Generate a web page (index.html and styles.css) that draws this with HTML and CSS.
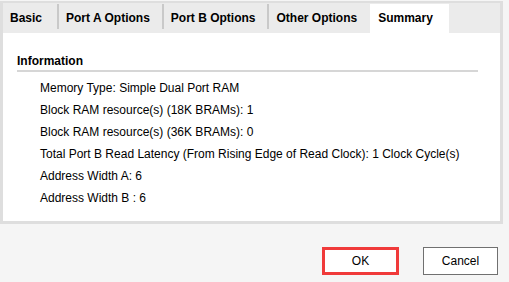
FILE: index.html
```html
<!DOCTYPE html>
<html lang="en">
<head>
  <meta charset="UTF-8">
  <title>Block Memory Generator - Summary</title>
  <link rel="stylesheet" href="styles.css">
</head>
<body>
  <div class="dialog">
    <!-- tabbed panel -->
    <div class="panel">
      <div class="tabs">
        <div class="tab">Basic</div>
        <div class="tab">Port A Options</div>
        <div class="tab">Port B Options</div>
        <div class="tab">Other Options</div>
        <div class="tab active">Summary</div>
      </div>
      <div class="content">
        <div class="section-title">Information</div>
        <ul class="info">
          <li>Memory Type: Simple Dual Port RAM</li>
          <li>Block RAM resource(s) (18K BRAMs): 1</li>
          <li>Block RAM resource(s) (36K BRAMs): 0</li>
          <li>Total Port B Read Latency (From Rising Edge of Read Clock): 1 Clock Cycle(s)</li>
          <li>Address Width A: 6</li>
          <li>Address Width B : 6</li>
        </ul>
      </div>
    </div>

    <div class="buttons">
      <button class="btn ok">OK</button>
      <button class="btn">Cancel</button>
    </div>
  </div>
</body>
</html>
```

FILE: styles.css
```css
body {
  margin: 0;
  background: #f5f5f5;
  font-family: "Liberation Sans", Arial, sans-serif;
  font-size: 12px;
  color: #000;
}
.dialog {
  width: 509px;
  height: 282px;
}
.panel {
  margin-top: 1px;
  width: 497px;
  border: 3px solid #dedede;
  border-top-width: 2px;
  background: #fff;
}
.tabs {
  display: flex;
  height: 30px;
  background: #ebebeb;
  padding-top: 1px;
  box-sizing: border-box;
}
.tab {
  font-weight: bold;
  height: 25px;
  line-height: 28px;
  padding: 0 12px 0 7px;
  border-left: 2px solid #c9c9c9;
}
.tab:first-child {
  border-left: none;
  padding: 0 15px 0 7px;
}
.tab.active {
  background: #fff;
  height: 29px;
  padding: 0 16px 0 8px;
  margin-left: 1px;
  border-left: none;
}
.content {
  height: 188px;
  padding: 21px 22px 0 14px;
  box-sizing: border-box;
}
.section-title {
  font-weight: bold;
  padding-bottom: 2px;
  border-bottom: 2px solid #d6d6d6;
}
.info {
  list-style: none;
  margin: 0;
  padding: 5px 0 0 23px;
}
.info li {
  line-height: 22px;
}
.buttons {
  display: flex;
  justify-content: flex-end;
  gap: 24px;
  padding: 23px 11px 0 0;
}
.btn {
  font-family: "Liberation Sans", Arial, sans-serif;
  font-size: 12px;
  width: 75px;
  height: 28px;
  background: #fff;
  border: 1px solid #707070;
  padding: 0;
  color: #000;
}
.btn.ok {
  width: 77px;
  border: 3px solid #f03a3a;
}
```
